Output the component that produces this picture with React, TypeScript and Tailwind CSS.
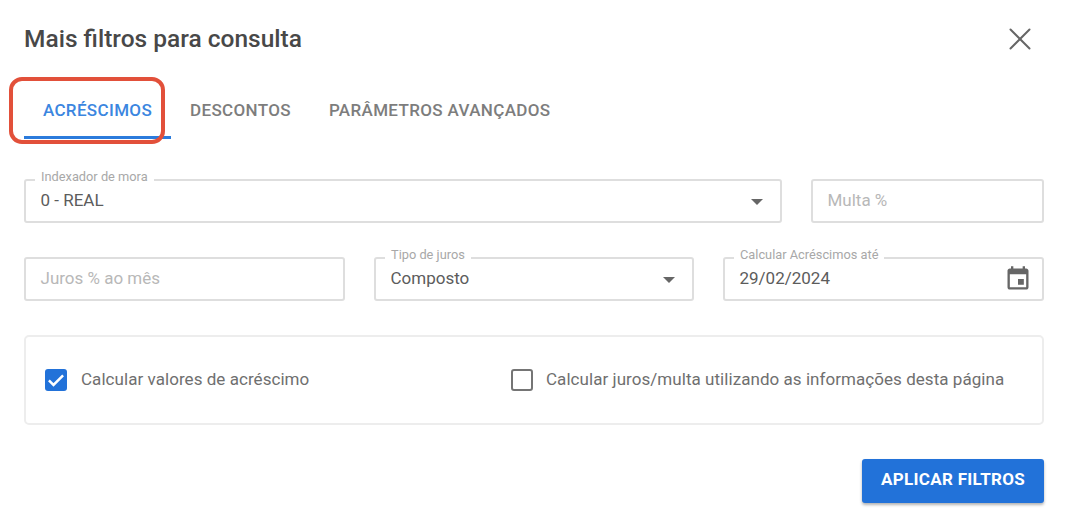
import { X } from "lucide-react";

const Field = ({
  label,
  value,
  placeholder,
  className = "",
  children,
}: {
  label?: string;
  value?: string;
  placeholder?: string;
  className?: string;
  children?: React.ReactNode;
}) => (
  <div className={`relative h-[44px] flex items-center justify-between pl-[14.5px] pr-3 rounded-[3px] border-2 border-[#dedede] ${className}`}>
    {label && (
      <span className="absolute left-[9px] -top-[12px] bg-white px-[6px] text-[12.8px] leading-[16px] text-[#a8a8a8]">
        {label}
      </span>
    )}
    {value && <span className="text-[17px] text-[#5c5c5c]">{value}</span>}
    {placeholder && <span className="text-[17px] text-[#b8b8b8]">{placeholder}</span>}
    {children}
  </div>
);

const Caret = () => (
  <svg width="12" height="6" viewBox="0 0 12 6" className="mt-[2px] mr-[5px]">
    <path d="M0 0h12L6 6z" fill="#666666" />
  </svg>
);

const App = () => {
  return (
    <div className="relative w-[1068px] h-[528px] bg-white px-[24px] font-['Roboto',sans-serif] overflow-hidden">
      <div className="flex items-center justify-between h-[78px]">
        <h1 className="text-[24.5px] font-medium text-[#484848]">Mais filtros para consulta</h1>
        <X size={38} strokeWidth={1.25} className="text-[#666666] mr-[5px]" />
      </div>

      <div className="flex h-[61px] pt-[5px] text-[17px] font-medium tracking-[0.35px]">
        <div className="w-[147px] flex items-center justify-center border-b-[3px] border-[#2b7bdc] text-[#3b86e0] -mt-[5px] pt-[8px]">
          ACRÉSCIMOS
        </div>
        <div className="ml-[19px] flex items-center text-[#7d7d7d]">DESCONTOS</div>
        <div className="ml-[38px] flex items-center text-[#7d7d7d]">PARÂMETROS AVANÇADOS</div>
      </div>

      {/* destaque vermelho */}
      <div className="absolute left-[9px] top-[77px] w-[156px] h-[67px] rounded-[13px] border-4 border-[#e2503a]" />

      <div className="flex gap-[29px] mt-[40px]">
        <Field label="Indexador de mora" value="0 - REAL" className="w-[758px]">
          <Caret />
        </Field>
        <Field placeholder="Multa %" className="flex-1" />
      </div>

      <div className="flex gap-[29px] mt-[34px]">
        <Field placeholder="Juros % ao mês" className="w-[321px]" />
        <Field label="Tipo de juros" value="Composto" className="w-[320px]">
          <Caret />
        </Field>
        <Field label="Calcular Acréscimos até" value="29/02/2024" className="flex-1">
          <svg width="28" height="28" viewBox="0 0 24 24" className="mr-[-2px]">
            <path
              fill="#666666"
              d="M19 3h-1V1h-2v2H8V1H6v2H5c-1.1 0-2 .9-2 2v14c0 1.1.9 2 2 2h14c1.1 0 2-.9 2-2V5c0-1.1-.9-2-2-2zm0 16H5V8h14v11zm-2-7h-5v5h5v-5z"
            />
          </svg>
        </Field>
      </div>

      <div className="mt-[34px] h-[90px] flex items-center rounded-[5px] border-2 border-[#ededed] pl-[19px] text-[17px] tracking-[0.05px] text-[#6f6f6f]">
        <div className="w-[22px] h-[22px] rounded-[3px] bg-[#2272d9] flex items-center justify-center">
          <svg width="20" height="20" viewBox="0 0 24 24">
            <path d="M3.5 12.5l5.5 5.5L20.5 6.5" fill="none" stroke="white" strokeWidth="3" />
          </svg>
        </div>
        <span className="ml-[14px] w-[228px] whitespace-nowrap">Calcular valores de acréscimo</span>
        <div className="ml-[202px] w-[22px] h-[22px] rounded-[3px] border-2 border-[#757575]" />
        <span className="ml-[13px]">Calcular juros/multa utilizando as informações desta página</span>
      </div>

      <div className="flex justify-end mt-[34px]">
        <button className="w-[182px] h-[44px] pb-[2px] rounded-[3px] bg-[#2272d9] text-white text-[17px] font-bold tracking-[0.3px] shadow-[0_2px_3px_rgba(0,0,0,0.3)]">
          APLICAR FILTROS
        </button>
      </div>
    </div>
  );
};

export default App;
